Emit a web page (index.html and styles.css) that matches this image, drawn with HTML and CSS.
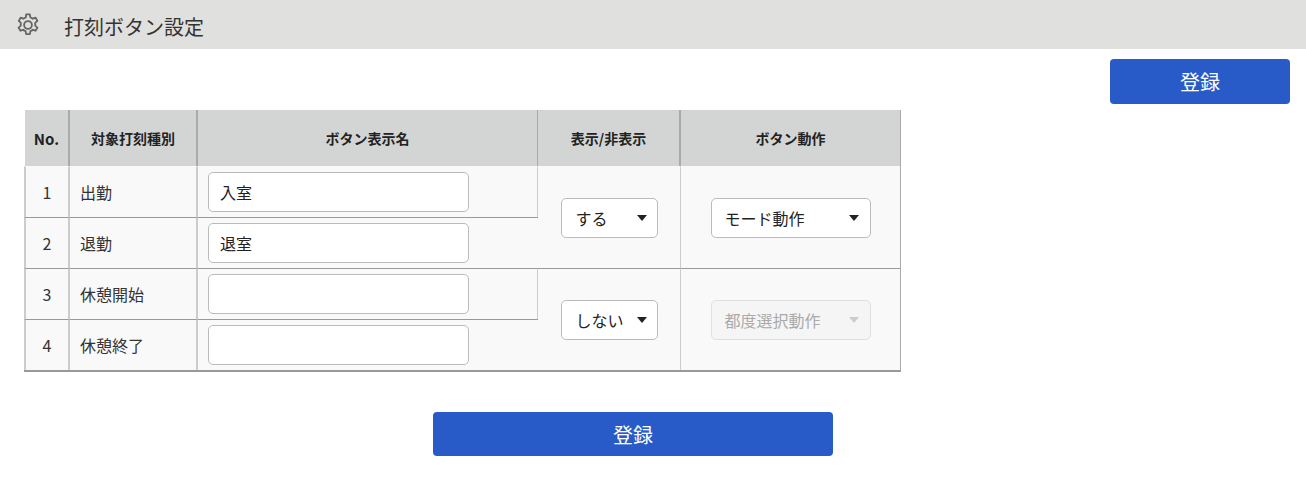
FILE: index.html
```html
<!DOCTYPE html>
<html lang="ja">
<head>
<meta charset="utf-8">
<title>打刻ボタン設定</title>
<link rel="stylesheet" href="styles.css">
</head>
<body>
<header class="page-header">
  <svg class="gear" viewBox="0 0 24 24" width="26" height="26" fill="none" stroke="#666" stroke-width="1.7" stroke-linejoin="round" stroke-linecap="round">
    <circle cx="12" cy="12" r="3.6"/>
    <path d="M10.3 2.2h3.4l.5 2.7a7.4 7.4 0 0 1 2.2 1.3l2.6-.9 1.7 2.9-2.1 1.8a7.4 7.4 0 0 1 0 2.6l2.1 1.8-1.7 2.9-2.6-.9a7.4 7.4 0 0 1-2.2 1.3l-.5 2.7h-3.4l-.5-2.7a7.4 7.4 0 0 1-2.2-1.3l-2.6.9-1.7-2.9 2.1-1.8a7.4 7.4 0 0 1 0-2.6L3.5 8.2l1.7-2.9 2.6.9A7.4 7.4 0 0 1 10 4.9z"/>
  </svg>
  <h1 class="page-title">打刻ボタン設定</h1>
</header>
<div class="toolbar">
  <button class="btn btn-top" type="button">登録</button>
</div>
<table class="settings">
  <colgroup>
    <col class="c-no"><col class="c-type"><col class="c-name"><col class="c-show"><col class="c-action">
  </colgroup>
  <thead>
    <tr>
      <th>No.</th><th>対象打刻種別</th><th class="thin">ボタン表示名</th><th>表示/非表示</th><th>ボタン動作</th>
    </tr>
  </thead>
  <tbody>
    <tr>
      <td class="num">1</td><td class="type">出勤</td>
      <td class="name"><input class="field" type="text" value="入室"></td>
      <td class="ctl thin" rowspan="2"><div class="sel sel-s"><span>する</span></div></td>
      <td class="ctl" rowspan="2"><div class="sel sel-l"><span>モード動作</span></div></td>
    </tr>
    <tr>
      <td class="num">2</td><td class="type">退勤</td>
      <td class="name"><input class="field" type="text" value="退室"></td>
    </tr>
    <tr class="group">
      <td class="num">3</td><td class="type">休憩開始</td>
      <td class="name"><input class="field" type="text"></td>
      <td class="ctl thin" rowspan="2"><div class="sel sel-s"><span>しない</span></div></td>
      <td class="ctl" rowspan="2"><div class="sel sel-l disabled"><span>都度選択動作</span></div></td>
    </tr>
    <tr>
      <td class="num">4</td><td class="type">休憩終了</td>
      <td class="name"><input class="field" type="text"></td>
    </tr>
  </tbody>
</table>
<div class="footer">
  <button class="btn btn-bottom" type="button">登録</button>
</div>
</body>
</html>
```

FILE: styles.css
```css
* { box-sizing: border-box; }
html, body { margin: 0; padding: 0; background: #fff; }
body {
  font-family: "Noto Sans CJK JP", "Noto Sans", sans-serif;
  color: #333;
  font-size: 16px;
}
.page-header {
  height: 49px;
  background: #e0e0de;
  display: flex;
  align-items: center;
  padding-left: 15px;
  gap: 23px;
}
.gear { flex: none; margin-top: 5px; margin-bottom: 5px; }
.page-title { margin: 0; font-size: 20px; font-weight: 400; line-height: 1; color: #333; margin-top: 5px; }
.toolbar { display: flex; justify-content: flex-end; padding: 10px 16px 0 0; }
.btn {
  display: block;
  border: 0;
  border-radius: 4px;
  background: #285bc8;
  color: #fff;
  font-family: inherit;
  font-size: 20px;
  padding: 0;
}
.btn-top { width: 180px; height: 45px; }
.btn-bottom { width: 400px; height: 44px; }
.settings {
  border-collapse: separate;
  border-spacing: 0;
  table-layout: fixed;
  width: 876px;
  margin: 6px 0 0 24px;
  border-right: 1px solid #aaa;
}
.c-no { width: 46px; }
.c-type { width: 128px; }
.c-name { width: 340px; }
.c-show { width: 143px; }
.c-action { width: 219px; }
th {
  height: 56px;
  background: #d3d5d5;
  font-size: 14px;
  font-weight: 700;
  color: #222;
  text-align: center;
  padding: 0;
  border-right: 2px solid #aaa;
}
th:first-child { border-left: 1px solid #fff; font-size: 15px; }
th:last-child, td:last-child { border-right: 0; }
th.thin { border-right-width: 1px; }
td {
  background: #f9f9f9;
  border-top: 1px solid #999;
  border-right: 2px solid #ccc;
  padding: 5px 0;
  height: 51px;
}
td.thin, td.name { border-right-width: 1px; }
tbody tr:first-child td { border-top-color: #f9f9f9; }
tbody tr:last-child td, td[rowspan] { border-bottom: 0; }
tbody tr td:first-child { border-left: 2px solid #ccc; }
.group td:nth-child(4), .group td:nth-child(5) { height: 51px; }
.num { text-align: center; }
.type { padding-left: 10px; }
.name { padding-left: 10px; }
.settings { border-bottom: 2px solid #999; }
.field {
  display: block;
  width: 261px;
  height: 40px;
  border: 1px solid #bbb;
  border-radius: 5px;
  background: #fff;
  padding: 0 11px;
  font-family: inherit;
  font-size: 16px;
  color: #222;
}
.ctl { text-align: center; }
.sel {
  position: relative;
  display: inline-flex;
  align-items: center;
  height: 40px;
  border: 1px solid #bbb;
  border-radius: 5px;
  background: #fff;
  color: #222;
  text-align: left;
  vertical-align: middle;
}
.sel::after {
  content: "";
  position: absolute;
  top: 16px;
  border-left: 5px solid transparent;
  border-right: 5px solid transparent;
  border-top: 6px solid #222;
}
.sel-s { width: 97px; padding-left: 14px; }
.sel-s::after { right: 10px; }
.sel-l { width: 160px; padding-left: 13px; }
.sel-l::after { right: 11px; }
.disabled { background: #f5f5f5; border-color: #e0e0e0; color: #aaa; }
.disabled::after { border-top-color: #ccc; }
.footer { width: 1266px; display: flex; justify-content: center; padding-top: 40px; }
```
